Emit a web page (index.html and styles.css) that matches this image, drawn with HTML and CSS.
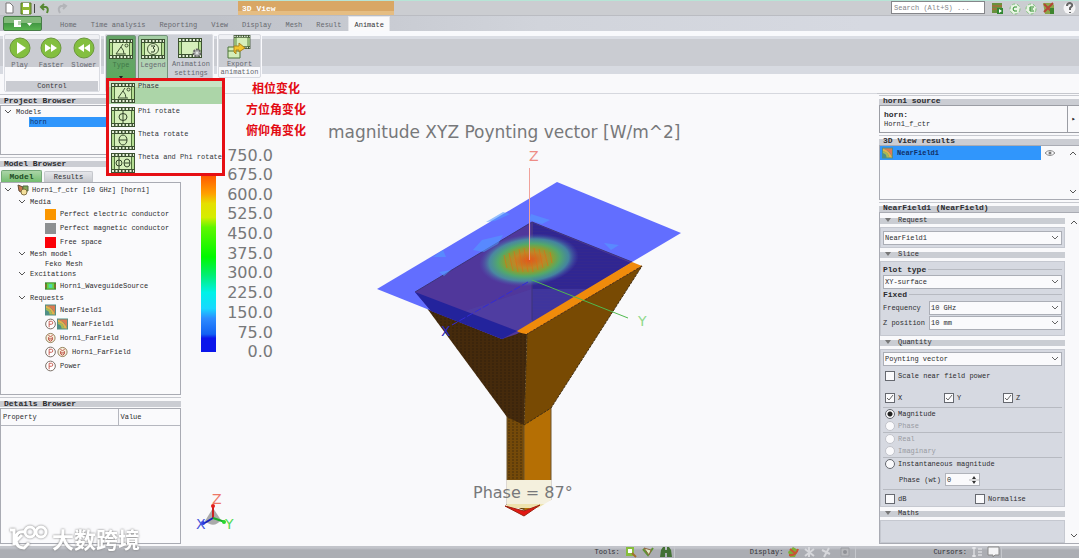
FILE: index.html
```html
<!DOCTYPE html>
<html lang="en">
<head>
<meta charset="utf-8">
<title>3D View</title>
<link rel="stylesheet" href="styles.css">
</head>
<body>
<svg class="defs" aria-hidden="true">
  <symbol id="film" viewBox="0 0 24 20">
    <rect width="24" height="20" fill="#3d5232"/>
    <rect x="1" y="4" width="22" height="12" fill="#b5dd92"/>
    <rect x="4" y="4" width="16" height="12" fill="#d6efbb"/>
    <path d="M1 2H23M1 18H23" stroke="#e4efd8" stroke-width="2" stroke-dasharray="2 1.5"/>
    <path d="M3.5 4V16M20.500 4V16" stroke="#4e713b"/>
  </symbol>
  <symbol id="near" viewBox="0 0 12 12">
    <rect width="12" height="12" fill="#4f8f86"/><path d="M1 1H11V11Q10 4 1 1Z" fill="#dd7a52"/><path d="M1 1Q9 4 11 11H8Q7 5 1 4Z" fill="#e6b04a"/><path d="M1 4Q7 5 8 11H5Q5 7 1 6Z" fill="#a7bb55"/>
  </symbol>
  <symbol id="circle-p" viewBox="0 0 12 12">
    <circle cx="6" cy="6" r="5.300" fill="#fff" stroke="#6f6259"/><path d="M4.500 9.500V3H7Q8.500 3 8.500 4.800Q8.500 6.300 7 6.300H4.500" fill="none" stroke="#c5564b"/>
  </symbol>
  <symbol id="far" viewBox="0 0 12 12">
    <circle cx="6" cy="6" r="5" fill="#f8f0dd" stroke="#8b7750"/><path d="M3.500 2.500L6 5L8.500 2.500M4 5Q3 9 6 9.500Q9 9 8 5M4 7H8" fill="none" stroke="#b8463a"/>
  </symbol>
  <symbol id="chev" viewBox="0 0 8 6"><path d="M1 1L4 4L7 1" fill="none" stroke="#555"/></symbol>
</svg>

<div class="app">
  <header class="titlebar">
    <div class="quick">
      <svg width="68" height="14" viewBox="0 0 68 14"><path d="M6 2H10L13 5V12H6Z" fill="#fff" stroke="#777"/><path d="M21 2H31V13H21Z" fill="#8fb832" stroke="#55762a"/><path d="M23 2H29V6H23ZM23 9H29V13H23Z" fill="#fff"/><path d="M34.500 3V12" stroke="#444"/><path d="M41 6H46Q49 7 47 12M44 3L41 6L44 9" fill="none" stroke="#568832" stroke-width="2"/><path d="M66 5H61Q57 7 60 12M63 3L66 5L63 8" fill="none" stroke="#b2b4b8" stroke-width="2"/></svg>
    </div>
    <div class="context">3D View</div>
    <div class="tools-right">
      <input class="search" type="text" aria-label="Search" placeholder="Search (Alt+S) ...">
      <svg width="88" height="14" viewBox="0 0 88 14"><path d="M1 2H11V12H1Z" fill="#69913b"/><path d="M1 5H11M1 8H11" stroke="#c65838"/><rect x="6" y="7" width="6" height="6" fill="#338832"/><path d="M8 8V12L11 10Z" fill="#fff"/><g fill="#e9f5e4" stroke="#7fc07b"><circle cx="24" cy="8" r="5" stroke-dasharray="3 2"/><circle cx="40" cy="8" r="5" stroke-dasharray="3 2"/></g><path d="M26 6Q22 5 22 8Q22 11 26 10M43 6H39V10H43M39 8H42" fill="none" stroke="#2d8c2d"/><path d="M52 2H61L63 4V13H54Z" fill="#8da54a"/><path d="M53 11L62 2M53 3L62 12" stroke="#b44636" stroke-width="2"/><path d="M59 7H63V13H59Z" fill="#3e852e"/><circle cx="78.500" cy="7" r="6" fill="#f4f4f5"/><path d="M76 5Q76 2 79 2Q82 3 81 5L79 7V9M79 11V12" fill="none" stroke="#666" stroke-width="2"/></svg>
    </div>
  </header>

  <nav class="tabs">
    <button class="filebtn" aria-label="File"><svg width="22" height="10" viewBox="0 0 22 10"><path d="M1 1H8V8H1Z" fill="#fff"/><path d="M5 3H8M5 5H8" stroke="#68a95c"/><path d="M14 4H19L16.500 7Z" fill="#fff"/></svg></button>
    <div class="tablist">
      <a href="#">Home</a><a href="#">Time analysis</a><a href="#">Reporting</a><a href="#">View</a><a href="#">Display</a><a href="#">Mesh</a><a href="#">Result</a><a href="#" class="active">Animate</a>
    </div>
  </nav>

  <section class="ribbon">
    <div class="group control">
      <div class="buttons">
        <button class="tool"><svg width="24" height="24" viewBox="0 0 24 24"><circle cx="12" cy="12" r="10" fill="#83bf3f" stroke="#6b983d"/><path d="M9 6L18 12L9 18Z" fill="#fff"/></svg>Play</button>
        <button class="tool"><svg width="24" height="24" viewBox="0 0 24 24"><circle cx="12" cy="12" r="10" fill="#83bf3f" stroke="#6b983d"/><path d="M6 8L12 12L6 16ZM12 8L18 12L12 16Z" fill="#fff"/></svg>Faster</button>
        <button class="tool"><svg width="24" height="24" viewBox="0 0 24 24"><circle cx="12" cy="12" r="10" fill="#83bf3f" stroke="#6b983d"/><path d="M18 8L12 12L18 16ZM12 8L6 12L12 16Z" fill="#fff"/></svg>Slower</button>
      </div>
      <div class="caption">Control</div>
    </div>
    <div class="group anim">
      <div class="type-wrap">
        <button class="tool type" aria-expanded="true"><svg width="24" height="20" viewBox="0 0 24 20"><use href="#film"/><path d="M14 5L7 15H17M12 8Q15 11 15 15" fill="none" stroke="#3c4e32"/><circle cx="17.500" cy="6.500" r="1.500" fill="none" stroke="#3c4e32"/></svg>Type<i class="down"></i></button>
        <div class="menu" role="menu">
          <button role="menuitem" class="on"><svg width="24" height="20" viewBox="0 0 24 20"><use href="#film"/><path d="M14 5L7 15H17M12 8Q15 11 15 15" fill="none" stroke="#3c4e32"/><circle cx="17.500" cy="6.500" r="1.500" fill="none" stroke="#3c4e32"/></svg><span>Phase</span></button>
          <button role="menuitem"><svg width="24" height="20" viewBox="0 0 24 20"><use href="#film"/><ellipse cx="12" cy="10" rx="4" ry="3.500" fill="none" stroke="#33452b"/><path d="M12 4V16" stroke="#33452b"/></svg><span>Phi rotate</span></button>
          <button role="menuitem"><svg width="24" height="20" viewBox="0 0 24 20"><use href="#film"/><ellipse cx="12" cy="10" rx="4" ry="5" fill="none" stroke="#33452b"/><path d="M8 10H16" stroke="#33452b"/></svg><span>Theta rotate</span></button>
          <button role="menuitem"><svg width="24" height="20" viewBox="0 0 24 20"><use href="#film"/><ellipse cx="8" cy="10" rx="3" ry="3" fill="none" stroke="#33452b"/><path d="M8 4V16M13 10H19" stroke="#33452b"/><ellipse cx="16" cy="10" rx="3" ry="4" fill="none" stroke="#33452b"/></svg><span>Theta and Phi rotate</span></button>
        </div>
        <div class="notes" lang="zh"><span>相位变化</span><span>方位角变化</span><span>俯仰角变化</span></div>
      </div>
      <button class="tool legend"><svg width="24" height="20" viewBox="0 0 24 20"><use href="#film"/><circle cx="12" cy="10" r="5.500" fill="#e0f2c9" stroke="#455c38"/><path d="M10 7H14L12 9Q15 10 13 13H10" fill="none" stroke="#33452b"/></svg>Legend</button>
      <button class="tool settings"><svg width="26" height="22" viewBox="0 0 26 22"><use href="#film" width="24" height="20"/><circle cx="19" cy="15" r="3.500" fill="#b5b7b7" stroke="#666" stroke-width="2" stroke-dasharray="2 1"/><circle cx="19" cy="15" r="1" fill="#eee"/></svg>Animation<br>settings</button>
    </div>
    <div class="group export">
      <button class="tool"><svg width="26" height="24" viewBox="0 0 26 24"><use href="#film" x="6" width="18" height="14"/><path d="M1 12H13V23H1Z" fill="#d4eeb9" stroke="#4c753b"/><path d="M1 16H13" stroke="#4c753b"/><path d="M7 17V11H12V8L18 13L12 17V15H9V19Z" fill="#f3c52d" stroke="#a98422"/></svg>Export<br>animation</button>
    </div>
  </section>

  <main class="work">
    <aside class="left">
      <h2 class="bar">Project Browser</h2>
      <div class="box project">
        <div class="row branch"><svg class="chev"><use href="#chev"/></svg>Models</div>
        <div class="row selected">horn</div>
      </div>
      <h2 class="bar">Model Browser</h2>
      <div class="subtabs"><button class="cur">Model</button><button>Results</button></div>
      <div class="box model">
        <div class="row item root"><svg class="chev"><use href="#chev"/></svg><svg class="rooticon" width="14" height="12" viewBox="0 0 14 12"><path d="M2 1L7 3V9L3 7Z" fill="#c97649" stroke="#634e39"/><path d="M7 2H12V7H7Z" fill="#83a957" stroke="#4e683e"/><circle cx="8" cy="8" r="3" fill="#f3e09c" stroke="#837143"/></svg>Horn1_f_ctr [10 GHz] [horn1]</div>
        <div class="row branch l1"><svg class="chev"><use href="#chev"/></svg>Media</div>
        <div class="row item l2"><i class="swatch orange"></i>Perfect electric conductor</div>
        <div class="row item l2"><i class="swatch grey"></i>Perfect magnetic conductor</div>
        <div class="row item l2"><i class="swatch red"></i>Free space</div>
        <div class="row branch l1"><svg class="chev"><use href="#chev"/></svg>Mesh model</div>
        <div class="row branch l2">Feko Mesh</div>
        <div class="row branch l1"><svg class="chev"><use href="#chev"/></svg>Excitations</div>
        <div class="row item l2"><svg width="11" height="8" viewBox="0 0 12 8"><path d="M0 0H12V8H0Z" fill="#3b8a30"/><path d="M2 1H10V7H2Z" fill="#67d43c"/><path d="M4 2H8V6H4Z" fill="#4ed7af"/><path d="M1 2V6M11 2V6" stroke="#c3552e"/></svg>Horn1_WaveguideSource</div>
        <div class="row branch l1"><svg class="chev"><use href="#chev"/></svg>Requests</div>
        <div class="row item l2"><svg class="ic"><use href="#near"/></svg>NearField1</div>
        <div class="row item l2"><span class="pair"><svg class="ic"><use href="#circle-p"/></svg><svg class="ic"><use href="#near"/></svg></span>NearField1</div>
        <div class="row item l2"><svg class="ic"><use href="#far"/></svg>Horn1_FarField</div>
        <div class="row item l2"><span class="pair"><svg class="ic"><use href="#circle-p"/></svg><svg class="ic"><use href="#far"/></svg></span>Horn1_FarField</div>
        <div class="row item l2"><svg class="ic"><use href="#circle-p"/></svg>Power</div>
      </div>
      <h2 class="bar">Details Browser</h2>
      <div class="box details">
        <table><thead><tr><th class="prop">Property</th><th>Value</th></tr></thead></table>
      </div>
    </aside>

    <section class="scene">
      <svg viewBox="182 94 695 452" role="img" aria-label="Horn antenna near field">
        <defs>
          <linearGradient id="scale" x1="0" y1="0" x2="0" y2="1">
            <stop offset="0" stop-color="#f00000"/><stop offset=".12" stop-color="#ff6200"/><stop offset=".2" stop-color="#ffa000"/><stop offset=".25" stop-color="#e6df00"/><stop offset=".32" stop-color="#d4ee00"/><stop offset=".37" stop-color="#60f600"/><stop offset=".52" stop-color="#00f800"/><stop offset=".61" stop-color="#00ee70"/><stop offset=".7" stop-color="#00f2e8"/><stop offset=".78" stop-color="#18d8ff"/><stop offset=".83" stop-color="#2c8cff"/><stop offset=".91" stop-color="#1261f3"/><stop offset=".93" stop-color="#0b16eb"/><stop offset="1" stop-color="#0b16eb"/>
          </linearGradient>
          <radialGradient id="hot"><stop offset="0" stop-color="#e2551c"/><stop offset=".3" stop-color="#bd8728"/><stop offset=".48" stop-color="#86a036"/><stop offset=".62" stop-color="#52a86b"/><stop offset=".8" stop-color="#489ba2" stop-opacity=".8"/><stop offset="1" stop-color="#4f55b5" stop-opacity="0"/></radialGradient>
          <pattern id="mesh" width="3" height="3" patternUnits="userSpaceOnUse"><path d="M0 2H3" stroke="#25209a" opacity=".65"/></pattern>
          <pattern id="dots" width="4" height="3" patternUnits="userSpaceOnUse"><path d="M0 1H2" stroke="#231708" opacity=".55"/></pattern>
        </defs>
        <rect x="201" y="154" width="15" height="198" fill="url(#scale)"/>
        <g class="legend-text">
          <text x="273" y="161">750.0</text><text x="273" y="180">675.0</text><text x="273" y="200">600.0</text><text x="273" y="219">525.0</text><text x="273" y="239">450.0</text><text x="273" y="259">375.0</text><text x="273" y="278">300.0</text><text x="273" y="298">225.0</text><text x="273" y="318">150.0</text><text x="273" y="338">75.0</text><text x="273" y="357">0.0</text>
        </g>
        <text class="scene-title" x="328" y="138">magnitude XYZ Poynting vector [W/m^2]</text>
        <path d="M507 415L524 424V510L507 504Z" fill="#754a09"/>
        <path d="M507 415L524 424V510L507 504Z" fill="url(#dots)"/>
        <path d="M524 424L551 407V500L524 511Z" fill="#b56f04"/>
        <path d="M507 415V505M524 424V511M551 407V500" stroke="#6d552c"/>
        <path d="M415 292L527 334L524 425L507 417Z" fill="#452a0c"/>
        <path d="M415 292L527 334L524 425L507 417Z" fill="url(#dots)"/>
        <path d="M527 334L642 266L551 408L524 425Z" fill="#784a03" stroke="#443014" stroke-dasharray="3 1"/>
        <path d="M557 182L681 233L502 339L377 289Z" fill="#626eff"/>
        <path d="M532 222L632 262L517 334L502 339L431 311L415 292Z" fill="#50379b"/>
        <path d="M533 223L631 263L532 322Z" fill="#34288e"/>
        <path d="M533 223L631 263L532 322Z" fill="url(#mesh)"/>
        <path d="M532 289L590 289L532 323L517 331L465 311Z" fill="#4d44a8" opacity=".5"/>
        <path d="M415 292L517 331L502 339L431 311Z" fill="#23239c"/>
        <path d="M632 262L642 266L527 334Q519 333 517 331Z" fill="#f08b0b"/>
        <path d="M642 266L527 334" stroke="#583311" stroke-dasharray="3 1"/>
        <path d="M415 292L532 222L532 320M532 222L632 262" stroke="#3d3479" fill="none"/>
        <g fill="#539bff" opacity=".6"><path d="M473 250L482 240L503 235L498 244L484 252Z"/><path d="M486 222L503 212L510 214L495 221ZM531 214L550 220L542 224L529 220ZM604 243L619 245L611 250Z"/><path d="M433 257L443 250L446 257ZM439 272L451 270L444 276Z"/></g>
        <ellipse cx="529" cy="260" rx="50" ry="26" fill="url(#hot)" transform="rotate(-6 529 260)"/>
        <g stroke="#e16b12" opacity=".6"><path d="M504 255L507 268M509 253L513 271M514 251L518 272M519 249L523 272M524 248L528 272M529 248L533 272M534 248L538 270M539 249L543 268M544 250L548 266M550 252L552 263"/></g>
        <path d="M529.500 168V260" stroke="#f0a29b"/>
        <path d="M532 280L628 318" stroke="#50b94e"/>
        <path d="M528 282L452 325" stroke="#332bd4" stroke-dasharray="7 2"/>
        <text class="axis z" x="529" y="161">Z</text><text class="axis y" x="638" y="326">Y</text><text class="axis x" x="441" y="336">X</text>
        <path d="M507 480H551V500L538 508H507Z" fill="#eee3ae"/>
        <path d="M505 506L524 511L540 505L524 516Z" fill="#e31813" stroke="#9b2410"/>
        <rect x="467" y="480" width="112" height="24" fill="#f9f9fb" opacity=".6"/>
        <text class="phase" x="473" y="498">Phase = 87°</text>
        <path d="M205 521L213 508L221 520Q214 529 205 521Z" fill="#aaa"/><path d="M213 518V506" stroke="#c92122" stroke-width="2"/><path d="M213 518L203 524" stroke="#1721b8" stroke-width="2"/><path d="M213 518L225 522" stroke="#1aaf2a" stroke-width="2"/><circle cx="213" cy="506" r="2" fill="#e31f1b"/><circle cx="203" cy="523" r="2" fill="#253ae0"/><circle cx="224" cy="522" r="2" fill="#29d730"/>
        <text class="axis zz" x="212" y="504">Z</text><text class="axis xx" x="196" y="529">X</text><text class="axis yy" x="225" y="529">Y</text>
      </svg>
    </section>

    <aside class="right">
      <h2 class="bar">horn1 source</h2>
      <div class="source"><p><b>horn:</b><br>Horn1_f_ctr</p><span>▸</span></div>
      <h2 class="bar">3D View results</h2>
      <div class="results"><div class="selected"><svg class="ic"><use href="#near"/></svg><b>NearField1</b></div><svg class="eye" width="12" height="8" viewBox="0 0 12 8"><path d="M1 4Q6-1 11 4Q6 9 1 4Z" fill="none" stroke="#888"/><circle cx="6" cy="4" r="1.500" fill="#777"/></svg><div class="scroll"><svg class="chev up"><use href="#chev"/></svg><svg class="chev"><use href="#chev"/></svg></div></div>
      <h2 class="bar">NearField1 (NearField)</h2>
      <div class="inspector">
        <div class="fields">
          <h3>Request</h3>
          <div class="panel request"><select aria-label="Request"><option>NearField1</option></select></div>
          <h3>Slice</h3>
          <div class="panel slice">
            <label class="rule" for="plot"><b>Plot type</b></label>
            <select id="plot"><option>XY-surface</option></select>
            <div class="rule"><b>Fixed</b></div>
            <div class="pairrow"><label for="freq">Frequency</label><select id="freq"><option>10 GHz</option></select></div>
            <div class="pairrow"><label for="zpos">Z position</label><select id="zpos"><option>10 mm</option></select></div>
          </div>
          <h3>Quantity</h3>
          <div class="panel quantity">
            <select aria-label="Quantity"><option>Poynting vector</option></select>
            <label class="opt scale"><input type="checkbox">Scale near field power</label>
            <div class="three"><label class="opt"><input type="checkbox" checked>X</label><label class="opt"><input type="checkbox" checked>Y</label><label class="opt"><input type="checkbox" checked>Z</label></div>
            <div class="section"><label class="opt"><input type="radio" name="q" checked>Magnitude</label><label class="opt off"><input type="radio" name="q" disabled>Phase</label></div>
            <div class="section"><label class="opt off"><input type="radio" name="q" disabled>Real</label><label class="opt off"><input type="radio" name="q" disabled>Imaginary</label></div>
            <div class="section"><label class="opt"><input type="radio" name="q">Instantaneous magnitude</label><div class="wt"><label for="wt">Phase (wt)</label><span class="spin"><input id="wt" type="text" value="0"><svg width="10" height="12" viewBox="0 0 10 12"><path d="M3 5L5 2L7 5ZM3 7L5 10L7 7Z" fill="#333"/><path d="M0 6H10" stroke="#bbb"/></svg></span></div></div>
            <div class="two"><label class="opt"><input type="checkbox">dB</label><label class="opt"><input type="checkbox">Normalise</label></div>
          </div>
          <h3>Maths</h3>
          <div class="panel maths"></div>
        </div>
        <div class="scroll"><svg class="chev up"><use href="#chev"/></svg><svg class="chev"><use href="#chev"/></svg></div>
      </div>
    </aside>
  </main>

  <footer class="status">
    <div class="st tools">Tools:<svg width="50" height="12" viewBox="0 0 50 12"><path d="M2 1H10V10H2Z" fill="#86bd3c"/><path d="M4 3H8V7H4Z" fill="#fff"/><path d="M8 7L12 11" stroke="#a36e2f" stroke-width="2"/><path d="M19 3L24 9L29 2" fill="none" stroke="#5f9334" stroke-width="2"/><path d="M20 2L27 4L25 9Z" fill="#e1edc7" stroke="#8f643d"/><path d="M37 4L39 1H41V11H36ZM43 1H45L47 4L48 11H43ZM40 4H44V7H40Z" fill="#427034"/></svg></div>
    <div class="st display">Display:<svg width="68" height="12" viewBox="0 0 68 12"><path d="M1 6L6 1L11 4L8 11H3Z" fill="#7caf39"/><path d="M2 9Q9 10 11 3M3 3L9 8" fill="none" stroke="#c75434" stroke-width="2"/><g stroke="#d7d8dc" stroke-width="2"><path d="M18 3L27 10M27 3L18 10M22 1V11"/><path d="M35 4L43 8M42 2L37 11"/></g><path d="M54 2H62V10H54Z" fill="#b7b8bc" stroke="#9b9da2"/><circle cx="58" cy="6" r="2" fill="#8f9196"/></svg></div>
    <div class="st">Cursors:<svg width="30" height="12" viewBox="0 0 30 12"><path d="M3 1V11M1 2H5M1 10H5M7 3H11M7 6H11M7 9H11" stroke="#f1f1f4"/><path d="M17 1H28V9H24L22 11V9H17Z" fill="#f4f4f6" stroke="#888"/></svg></div>
  </footer>
  <div class="mark" lang="zh"><svg width="40" height="28" viewBox="0 0 40 28"><g fill="none" stroke="#fff" stroke-width="3"><path d="M1 6H5V21M17 8Q7 6 7 15Q7 24 15 24L20 19M7 17L13 11"/><circle cx="21" cy="8" r="5"/><circle cx="32" cy="8" r="5"/></g></svg><span>大数跨境</span></div>
</div>
</body>
</html>
```
FILE: styles.css
```css
* { box-sizing: border-box; }
html, body { height: 100%; }
body {
  margin: 0;
  background: #f9f9fb;
  color: #2c2c2f;
  font: 7px/10px "Liberation Mono", monospace;
}
button, input, select { font: inherit; color: inherit; margin: 0; padding: 0; border: 0; background: none; }
svg { display: block; flex: none; }
a { color: inherit; text-decoration: none; }
h2, h3, p { margin: 0; }
.defs { position: absolute; width: 0; height: 0; }
.app { position: relative; min-height: 100vh; display: flex; flex-direction: column; }

.titlebar { display: flex; height: 15px; background: #cbcdd1; border-top: 1px solid #b7e5d6; }
.quick { width: 238px; }
.context { width: 156px; padding: 3px 4px; color: #fff; font-weight: bold; font-size: 8px; background: linear-gradient(#d9a765 75%, #e5bd82 75%); }
.tools-right { margin-left: auto; display: flex; gap: 6px; align-items: flex-start; }
.search { width: 94px; height: 13px; padding: 0 2px; background: #fff; border: 1px solid #85868a; }
.search::placeholder { color: #85868a; opacity: 1; }

.tabs { display: flex; height: 16px; background: linear-gradient(90deg, #bfc2c9 20%, #d1d4db 50%, #d6d9e1 80%); border-top: 1px solid #babcc2; }
.filebtn { width: 39px; margin-left: 3px; padding-left: 9px; border-radius: 2px; background: linear-gradient(#82b97b 45%, #439843 50%, #58b450); border: 1px solid #477c48; }
.tablist { display: flex; margin-left: 11px; color: #67696f; }
.tablist a { padding: 4px 7px 0; }
.tablist .active { padding: 3px 5px 0; color: #353538; background: #f9f9fb; border: 1px solid #e4e5e9; border-bottom: 0; }

.ribbon { display: flex; gap: 3px; height: 62px; padding: 2px 3px 0; background: linear-gradient(#f8f9fc 0 5px, #dadde4 5px 8px, #caccd2 8px 35px, #d7dae1 35px 43px, #f9f9fb 43px); }
.group { border: 1px solid #f9f9fc; border-radius: 3px; background: linear-gradient(#eff0f4 0 5px, #caccd2 5px 33px, #f9f9fb 33px); outline: 1px solid #dadce2; outline-offset: -2px; }
.control { width: 98px; height: 60px; }
.buttons { display: flex; justify-content: space-around; height: 47px; padding-top: 2px; }
.caption { height: 10px; margin: 0 2px; text-align: center; color: #36363a; background: #caccd2; }
.tool { display: flex; flex-direction: column; align-items: center; white-space: nowrap; color: #666970; }
.buttons .tool { line-height: 8px; gap: 1px; }
.anim { display: flex; width: 110px; height: 60px; padding: 1px 1px; background: #cdd0d7; }
.anim .tool { height: 56px; padding-top: 3px; gap: 2px; line-height: 9px; }
.anim .type, .anim .legend { width: 30px; border: 1px solid #75937b; border-radius: 2px; }
.type-wrap { position: relative; margin-right: 2px; }
.anim .type { background: linear-gradient(#65a467 0 24px, #55ad57); color: #3f7747; }
.anim .legend { background: linear-gradient(#a4cea4, #bdd6c2); }
.anim .settings { width: 42px; margin-left: 2px; gap: 0; }
.down { width: 4px; height: 3px; margin-top: 4px; background: #222; clip-path: polygon(0 0, 100% 0, 50% 100%); }
.menu { position: absolute; z-index: 3; top: 43px; left: 0; width: 119px; height: 98px; padding: 0; border: 3px solid #e60f14; background: #f9f9fb; }
.menu button { display: flex; width: 100%; height: 23px; gap: 3px; padding-left: 2px; text-align: left; align-items: center; white-space: nowrap; color: #33373b; }
.menu button + button { padding-top: 2px; }
.menu span { align-self: flex-start; }
.menu .on { background: linear-gradient(#c7e3c3 0 6px, #acd5a8 6px); }
.notes { position: absolute; z-index: 2; top: 44px; left: 139px; display: flex; flex-direction: column; gap: 0; width: 62px; text-align: center; color: #e30b13; font: bold 12px/21px "Liberation Sans", "Noto Sans CJK SC", sans-serif; white-space: nowrap; }
.export { width: 45px; height: 46px; padding-top: 1px; }
.export .tool { width: 100%; line-height: 8px; gap: 1px; }

.work { flex: 1; display: grid; grid-template-columns: 182px minmax(0, 1fr) 202px; min-height: 452px; }
.left { display: flex; flex-direction: column; padding: 1px 1px 2px 0; }
.bar { height: 11px; padding: 0 4px; font-size: 8px; line-height: 11px; font-weight: bold; background: linear-gradient(#f9f9fb 0 3px, #cbcdd3 3px 9px, #f9f9fb 9px); border-top: 1px solid #c7c9cf; }
.box { background: #fafafc; border: 1px solid #a9abb3; }
.row { display: flex; align-items: center; white-space: nowrap; }
.branch { height: 10px; }
.item { height: 14px; }
.chev { width: 8px; height: 6px; }
.up { transform: rotate(180deg); }
.row > .chev { margin-right: 4px; }
.project { height: 50px; padding: 1px 0; margin-bottom: 2px; }
.project .branch { padding-left: 3px; }
.project .selected { height: 10px; margin-left: 28px; padding-left: 1px; }
.selected { background: #3096fc; color: #102f66; }
.subtabs { display: flex; align-items: flex-end; height: 14px; gap: 2px; padding-left: 1px; }
.subtabs button { width: 49px; height: 11px; background: linear-gradient(#e5e6ea, #c7c9ce); border: 1px solid #c5c7cc; border-bottom: 0; border-radius: 2px 2px 0 0; }
.subtabs .cur { width: 41px; height: 12px; font-size: 8px; font-weight: bold; color: #204d25; background: linear-gradient(#abd5a7, #74bd70); border-color: #75a878; }
.model { height: 213px; margin-bottom: 2px; }
.root { padding-left: 3px; }
.rooticon { margin-right: 2px; }
.l1 { padding-left: 17px; }
.l2 { padding-left: 44px; gap: 4px; }
.ic { width: 11px; height: 12px; }
.pair { display: flex; gap: 1px; }
.swatch { width: 11px; height: 11px; }
.orange { background: #fa9600; }
.grey { background: #8d9092; }
.red { background: #fb0008; }
.details { flex: 1; min-height: 134px; }
table { width: 100%; border-collapse: collapse; table-layout: fixed; }
th { height: 16px; padding: 0 2px; font-weight: normal; text-align: left; border-bottom: 1px solid #b5b7bf; }
th.prop { width: 117px; border-right: 1px solid #b5b7bf; }

.scene { min-width: 0; border-top: 1px solid #d6d8de; }
.scene svg { width: 100%; height: 100%; }
.scene text { font-family: "DejaVu Sans", sans-serif; font-size: 16px; fill: #77787a; }
.scene .scene-title { font-size: 17px; }
.scene .legend-text text { text-anchor: end; }
.scene .axis { font-size: 14px; }
.scene .z { fill: #ee8c85; }
.scene .y { fill: #92da8d; }
.scene .x { fill: #2c2abd; }
.scene .zz { fill: #ed7766; }
.scene .xx { fill: #4355dc; }
.scene .yy { fill: #55db55; }

.right { display: flex; flex-direction: column; padding: 1px 0 2px 2px; border-top: 1px solid #c5c7cd; }
.right .bar { height: 10px; line-height: 10px; }
.source { display: flex; height: 28px; border: 1px solid #9b9da4; border-right: 0; margin-bottom: 2px; }
.source p { flex: 1; padding: 4px; line-height: 9px; border-right: 1px solid #9b9da4; }
.source span { width: 11px; text-align: center; line-height: 26px; }
.source b { font-size: 8px; }
.results { display: flex; height: 55px; margin-bottom: 2px; border: 1px solid #a9abb3; border-right: 0; }
.results .selected { display: flex; align-items: center; gap: 4px; width: 161px; height: 14px; padding-left: 2px; }
.eye { margin: 3px 3px; }
.scroll { width: 12px; margin-left: auto; padding: 4px 2px; display: flex; flex-direction: column; justify-content: space-between; }
.inspector { flex: 1; display: flex; border: 1px solid #a9abb3; border-right: 0; padding-top: 2px; }
.fields { flex: 1; display: flex; flex-direction: column; padding-right: 3px; }
h3 { height: 11px; margin-bottom: 1px; padding-left: 18px; font-size: 7px; line-height: 10px; font-weight: normal; position: relative; background: linear-gradient(#f9f9fb 0 3px, #cacdd3 3px 9px, #f9f9fb 9px); }
h3::before { content: ""; position: absolute; left: 5px; top: 3px; width: 6px; height: 4px; background: #777; clip-path: polygon(0 0, 100% 0, 50% 100%); }
.panel { background: #d6d9e1; border: 1px solid #c5c8d0; margin-bottom: 1px; padding: 2px; }
select { appearance: none; display: block; width: 100%; height: 14px; padding: 0 1px; background: #fafafc url("data:image/svg+xml,%3Csvg xmlns='http://www.w3.org/2000/svg' width='8' height='6'%3E%3Cpath d='M1 1L4 4L7 1' fill='none' stroke='%23666'/%3E%3C/svg%3E") no-repeat right 2px center; border: 1px solid #abaeb6; }
.request { height: 21px; padding-top: 3px; }
.slice { height: 75px; }
.rule { display: flex; align-items: center; gap: 2px; height: 11px; font-size: 8px; }
.rule::after { content: ""; flex: 1; border-top: 1px solid #b7bac1; }
.pairrow { display: flex; align-items: center; margin-top: 1px; }
.pairrow label { width: 46px; flex: none; }
.quantity { height: 158px; }
.opt { display: flex; align-items: center; gap: 3px; height: 12px; white-space: nowrap; }
.opt input { appearance: none; width: 10px; height: 10px; border: 1px solid #666970; background: #fafafc; }
.opt input[type="radio"] { border-radius: 50%; }
.opt input[type="radio"]:checked { background: radial-gradient(#222 0 2px, #fafafc 3px); }
.opt input[type="checkbox"]:checked { background: #fafafc url("data:image/svg+xml,%3Csvg xmlns='http://www.w3.org/2000/svg' width='8' height='8'%3E%3Cpath d='M1 4L3 6L7 1' fill='none' stroke='%23666'/%3E%3C/svg%3E"); }
.opt.off { color: #999ba2; }
.opt.off input { border-color: #c1c3ca; }
.quantity > .opt, .three, .section, .two { padding-left: 2px; }
.scale { margin-top: 4px; }
.three { display: grid; grid-template-columns: repeat(3, 59px); margin-top: 10px; padding-bottom: 3px; }
.section { border-top: 1px solid #b7bac1; }
.wt { display: flex; align-items: center; gap: 4px; height: 19px; padding-left: 14px; }
.spin { display: flex; align-items: center; width: 35px; height: 13px; background: #fafafc; border: 1px solid #b0b3ba; }
.spin input { width: 23px; padding-left: 1px; }
.two { display: grid; grid-template-columns: 90px 1fr; padding-top: 3px; border-top: 1px solid #b7bac1; }
.maths { flex: 1; min-height: 20px; margin-bottom: 0; }

.status { display: flex; align-items: center; justify-content: flex-end; height: 12px; padding-right: 77px; color: #303035; background: linear-gradient(#c2c4ca 0 2px, #abadb3 4px); }
.st { display: flex; align-items: center; gap: 4px; border-right: 1px solid #c5c7cc; }
.tools { margin-right: 75px; }
.display { margin-right: 77px; }
.mark { position: absolute; z-index: 4; left: 9px; bottom: 6px; display: flex; align-items: center; gap: 3px; color: #fff; font: bold 22px/28px "Noto Sans CJK SC", sans-serif; filter: drop-shadow(0 0 1px #777); }
```
